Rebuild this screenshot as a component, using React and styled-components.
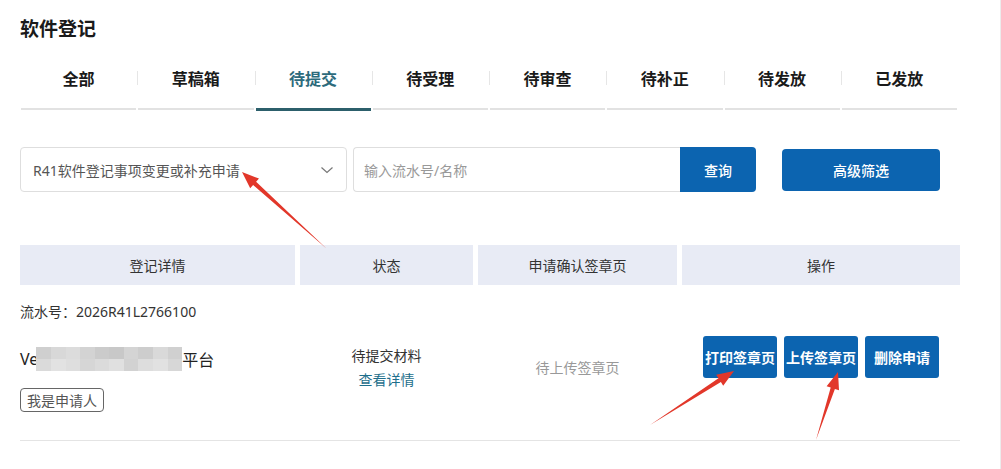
import React from 'react'
import styled, { createGlobalStyle } from 'styled-components'

const GlobalStyle = createGlobalStyle`
  html, body {
    margin: 0;
    padding: 0;
    background: #fff;
  }
  body {
    font-family: "Noto Sans", "Noto Sans CJK SC", sans-serif;
    color: #333;
  }
  * { box-sizing: border-box; }
`

const Page = styled.div`
  position: relative;
  width: 1001px;
  height: 469px;
  padding: 0 40px 0 20px;
  border-right: 1px solid #ececec;
  overflow: hidden;
`

const Title = styled.h1`
  margin: 0;
  padding-top: 16px;
  height: 58px;
  font-size: 19px;
  line-height: 26px;
  font-weight: 700;
  color: #1a1a1a;
`

const Tabs = styled.div`
  display: flex;
  width: 938px;
  height: 53px;
  align-items: stretch;
`

const Tab = styled.div`
  position: relative;
  flex: 1;
  display: flex;
  align-items: center;
  justify-content: center;
  margin: 0 1px;
  padding-bottom: 10px;
  font-size: 16px;
  font-weight: 700;
  color: ${p => (p.$active ? '#2d6b7c' : '#1a1a1a')};
  border-bottom: ${p => (p.$active ? '3px solid #2c5f6b' : '2px solid #e2e2e2')};
  margin-bottom: ${p => (p.$active ? '0' : '1px')};

  &:not(:first-child)::before {
    content: '';
    position: absolute;
    left: -1px;
    top: 50%;
    width: 1px;
    height: 14px;
    margin-top: -12px;
    background: #e6e6e6;
  }
`

const Toolbar = styled.div`
  display: flex;
  align-items: center;
  margin-top: 36px;
  height: 45px;
`

const Select = styled.div`
  width: 327px;
  height: 45px;
  display: flex;
  align-items: center;
  justify-content: space-between;
  padding: 0 12px 0 12px;
  border: 1px solid #dedede;
  border-radius: 4px;
  font-size: 14px;
  color: #555;
`

const SearchBox = styled.div`
  display: flex;
  margin-left: 6px;
  height: 45px;
`

const Input = styled.div`
  width: 327px;
  height: 45px;
  display: flex;
  align-items: center;
  padding-left: 10px;
  border: 1px solid #dedede;
  border-right: none;
  border-radius: 4px 0 0 4px;
  font-size: 14px;
  color: #999;
`

const Button = styled.div`
  display: flex;
  align-items: center;
  justify-content: center;
  background: #0c64b0;
  color: #fff;
  font-size: 14px;
  font-weight: ${p => (p.$bold ? 700 : 500)};
  width: ${p => p.$w}px;
  height: ${p => p.$h}px;
  border-radius: ${p => p.$radius || '4px'};
  white-space: nowrap;
`

const FilterButton = styled(Button)`
  margin-left: 26px;
`

const HeaderRow = styled.div`
  display: grid;
  grid-template-columns: 275px 173px 199px 278px;
  column-gap: 5px;
  width: 940px;
  margin-top: 53px;
  height: 40px;
`

const HeaderCell = styled.div`
  display: flex;
  align-items: center;
  justify-content: center;
  background: #e8ebf5;
  font-size: 14px;
  color: #333;
`

const Serial = styled.div`
  margin-top: 17px;
  font-size: 14px;
  line-height: 20px;
  color: #333;
`

const Record = styled.div`
  display: grid;
  grid-template-columns: 275px 173px 199px 283px;
  column-gap: 5px;
  width: 940px;
  height: 119px;
  padding-top: 5px;
  border-bottom: 1px solid #e4e4e4;
`

const NameCell = styled.div`
  display: flex;
  flex-direction: column;
  align-items: flex-start;
  padding-top: 18px;
`

const Name = styled.div`
  display: flex;
  align-items: center;
  height: 28px;
  font-size: 16px;
  color: #222;
`

const Mosaic = styled.div`
  display: grid;
  grid-template-columns: repeat(10, 14.6px);
  grid-template-rows: repeat(2, 12px);
  margin: 0 0 0 -2px;
`

const Pixel = styled.span`
  display: block;
  background: ${p => p.$tone};
`

const Tag = styled.div`
  margin-top: 15px;
  height: 24px;
  padding: 0 6px;
  display: flex;
  align-items: center;
  border: 1px solid #666;
  border-radius: 4px;
  font-size: 14px;
  color: #555;
`

const StatusCell = styled.div`
  display: flex;
  flex-direction: column;
  align-items: center;
  padding-top: 17px;
  font-size: 14px;
  line-height: 24px;
  color: #333;
`

const Link = styled.span`
  color: #1e6f8c;
`

const SignCell = styled.div`
  display: flex;
  justify-content: center;
  padding-top: 30px;
  font-size: 14px;
  color: #999;
`

const Actions = styled.div`
  display: flex;
  gap: 7px;
  padding: 9px 0 0 21px;
`

const Overlay = styled.svg`
  position: absolute;
  left: 0;
  top: 0;
  pointer-events: none;
`

const tabs = ['全部', '草稿箱', '待提交', '待受理', '待审查', '待补正', '待发放', '已发放']

const tones = [
  '#cfcfcf', '#d8d8d8', '#dcdcdc', '#d3d3d3', '#cbcbcb', '#c8c8c8', '#d4d4d4', '#cdcdcd', '#d9d9d9', '#d0d0d0',
  '#dadada', '#e2e2e2', '#dedede', '#d6d6d6', '#dbdbdb', '#e0e0e0', '#d2d2d2', '#dddddd', '#e1e1e1', '#d7d7d7',
]

// tapered callout arrow from tail to tip
function arrowPoints([x1, y1], [x2, y2], head = 17, half = 6.5) {
  const dx = x2 - x1
  const dy = y2 - y1
  const len = Math.hypot(dx, dy)
  const ux = dx / len
  const uy = dy / len
  const nx = -uy
  const ny = ux
  const bx = x2 - ux * head
  const by = y2 - uy * head
  const neck = 2.2
  const pts = [
    [x1, y1],
    [bx + nx * neck, by + ny * neck],
    [bx + nx * half, by + ny * half],
    [x2, y2],
    [bx - nx * half, by - ny * half],
    [bx - nx * neck, by - ny * neck],
  ]
  return pts.map(p => p.map(v => v.toFixed(1)).join(',')).join(' ')
}

const arrows = [
  [[327, 249], [242, 172]],
  [[650, 425], [734, 371]],
  [[816, 440], [838, 372]],
]

export default function App() {
  return (
    <Page>
      <GlobalStyle />
      <Title>软件登记</Title>
      <Tabs>
        {tabs.map(t => (
          <Tab key={t} $active={t === '待提交'}>{t}</Tab>
        ))}
      </Tabs>

      <Toolbar>
        <Select>
          <span>R41软件登记事项变更或补充申请</span>
          <svg width="14" height="14" viewBox="0 0 14 14" fill="none">
            <path d="M1.5 4.5 L7 9.5 L12.5 4.5" stroke="#777" strokeWidth="1.2" />
          </svg>
        </Select>
        <SearchBox>
          <Input>输入流水号/名称</Input>
          <Button $w={76} $h={45} $radius="0 4px 4px 0">查询</Button>
        </SearchBox>
        <FilterButton $w={158} $h={42}>高级筛选</FilterButton>
      </Toolbar>

      <HeaderRow>
        <HeaderCell>登记详情</HeaderCell>
        <HeaderCell>状态</HeaderCell>
        <HeaderCell>申请确认签章页</HeaderCell>
        <HeaderCell>操作</HeaderCell>
      </HeaderRow>

      <Serial>流水号：2026R41L2766100</Serial>

      <Record>
        <NameCell>
          <Name>
            Ve
            <Mosaic>
              {tones.map((c, i) => <Pixel key={i} $tone={c} />)}
            </Mosaic>
            平台
          </Name>
          <Tag>我是申请人</Tag>
        </NameCell>
        <StatusCell>
          <span>待提交材料</span>
          <Link>查看详情</Link>
        </StatusCell>
        <SignCell>待上传签章页</SignCell>
        <Actions>
          <Button $w={74} $h={42} $bold $radius="3px">打印签章页</Button>
          <Button $w={74} $h={42} $bold $radius="3px">上传签章页</Button>
          <Button $w={74} $h={42} $bold $radius="3px">删除申请</Button>
        </Actions>
      </Record>

      <Overlay width="1001" height="469">
        {arrows.map(([a, b], i) => (
          <polygon key={i} points={arrowPoints(a, b)} fill="#e2372a" />
        ))}
      </Overlay>
    </Page>
  )
}
